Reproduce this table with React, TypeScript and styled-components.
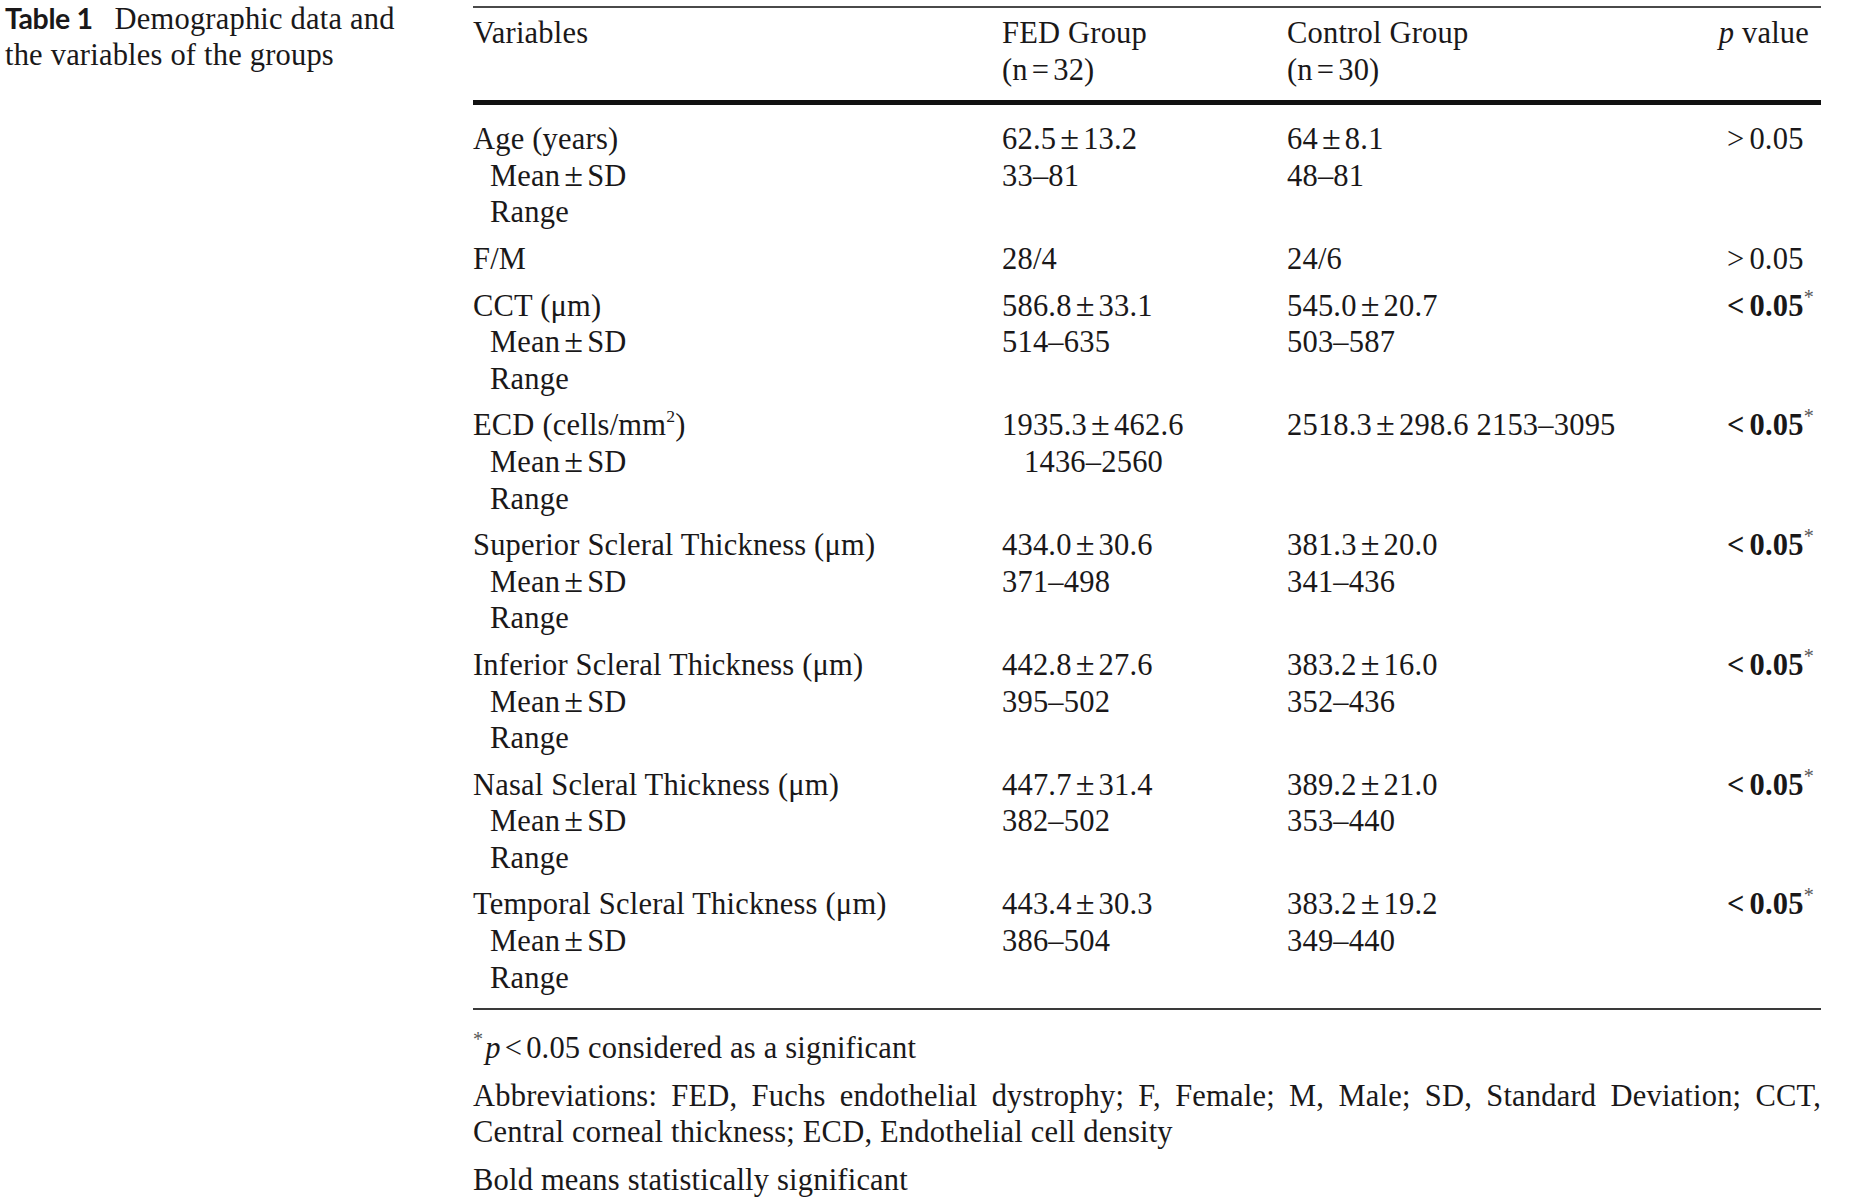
import React from 'react';
import styled, { createGlobalStyle } from 'styled-components';

const GlobalStyle = createGlobalStyle`
    html, body {
        margin: 0;
        padding: 0;
        background: #ffffff;
    }
    body {
        width: 1851px;
        height: 1200px;
        overflow: hidden;
        color: #1a1819;
        font-family: "Liberation Serif", "Times New Roman", serif;
        font-size: 30.5px;
        line-height: 36.6px;
        letter-spacing: 0.2px;
    }
`;

const Page = styled.div`
    display: flex;
    align-items: flex-start;
    padding-left: 5px;
`;

const Caption = styled.div`
    width: 468px;
    flex: 0 0 468px;
    line-height: 36px;
    white-space: nowrap;
`;

const CaptionLabel = styled.span`
    font-family: Lato, "Open Sans", sans-serif;
    font-weight: 700;
    font-size: 28.5px;
    letter-spacing: -0.4px;
    margin-right: 22px;
`;

const TableBlock = styled.div`
    width: 1348px;
    padding-top: 6px;
`;

const Rule = styled.div<{ $weight: number; $tone?: string }>`
    height: ${(p) => p.$weight}px;
    background: ${(p) => p.$tone || '#3a3a3a'};
`;

const Grid = styled.div<{ $gap?: number }>`
    display: grid;
    grid-template-columns: 529px 285px 420px 1fr;
    margin-top: ${(p) => p.$gap || 0}px;
`;

const Header = styled(Grid)`
    padding: 7px 0 12px;
`;

const Body = styled.div`
    padding: 16px 0 12px;
`;

const Cell = styled.div<{ $right?: boolean; $inset?: number }>`
    display: flex;
    flex-direction: column;
    white-space: nowrap;
    text-align: ${(p) => (p.$right ? 'right' : 'left')};
    padding-right: ${(p) => (p.$right ? 12 : 0)}px;
    padding-left: ${(p) => p.$inset || 0}px;
`;

const Line = styled.span<{ $indent?: number }>`
    display: block;
    padding-left: ${(p) => p.$indent || 0}px;
`;

const Italic = styled.i`
    font-style: italic;
`;

const Op = styled.span`
    margin: 0 4px;
`;

const PlusMinus = styled.span`
    display: inline-block;
    margin: 0 4px;
    font-size: 1.12em;
    line-height: 0;
`;

const Sup = styled.sup`
    font-size: 0.58em;
    line-height: 0;
    vertical-align: 0.72em;
`;

const Star = styled(Sup)`
    font-weight: 400;
    font-size: 0.66em;
    color: #555555;
    vertical-align: 0.62em;
`;

const PValue = styled.span<{ $bold?: boolean }>`
    font-weight: ${(p) => (p.$bold ? 700 : 400)};
`;

const Notes = styled.div`
    padding-top: 20px;
`;

const Para = styled.p`
    margin: 0 0 11px;
`;

const JustifiedLine = styled.span`
    display: block;
    text-align: justify;
    text-align-last: justify;
`;

const pm = (a: string, b: string) => (
    <>
        {a}
        <PlusMinus>±</PlusMinus>
        {b}
    </>
);

type Group = {
    label: React.ReactNode;
    sub?: boolean;
    fed: React.ReactNode[];
    control: React.ReactNode[];
    p: string;
    sig: boolean;
};

const groups: Group[] = [
    { label: 'Age (years)', sub: true, fed: [pm('62.5', '13.2'), '33–81'], control: [pm('64', '8.1'), '48–81'], p: '>', sig: false },
    { label: 'F/M', fed: ['28/4'], control: ['24/6'], p: '>', sig: false },
    { label: 'CCT (μm)', sub: true, fed: [pm('586.8', '33.1'), '514–635'], control: [pm('545.0', '20.7'), '503–587'], p: '<', sig: true },
    {
        label: (
            <>
                ECD (cells/mm<Sup>2</Sup>)
            </>
        ),
        sub: true,
        fed: [pm('1935.3', '462.6'), <Line $indent={22}>1436–2560</Line>],
        control: [<>{pm('2518.3', '298.6')} 2153–3095</>],
        p: '<',
        sig: true,
    },
    { label: 'Superior Scleral Thickness (μm)', sub: true, fed: [pm('434.0', '30.6'), '371–498'], control: [pm('381.3', '20.0'), '341–436'], p: '<', sig: true },
    { label: 'Inferior Scleral Thickness (μm)', sub: true, fed: [pm('442.8', '27.6'), '395–502'], control: [pm('383.2', '16.0'), '352–436'], p: '<', sig: true },
    { label: 'Nasal Scleral Thickness (μm)', sub: true, fed: [pm('447.7', '31.4'), '382–502'], control: [pm('389.2', '21.0'), '353–440'], p: '<', sig: true },
    { label: 'Temporal Scleral Thickness (μm)', sub: true, fed: [pm('443.4', '30.3'), '386–504'], control: [pm('383.2', '19.2'), '349–440'], p: '<', sig: true },
];

const GroupRow = ({ group, first }: { group: Group; first: boolean }) => (
    <Grid $gap={first ? 0 : 10}>
        <Cell>
            <Line>{group.label}</Line>
            {group.sub && (
                <>
                    <Line $indent={17}>
                        Mean<PlusMinus>±</PlusMinus>SD
                    </Line>
                    <Line $indent={17}>Range</Line>
                </>
            )}
        </Cell>
        <Cell>
            {group.fed.map((v, i) => (
                <Line key={i}>{v}</Line>
            ))}
        </Cell>
        <Cell>
            {group.control.map((v, i) => (
                <Line key={i}>{v}</Line>
            ))}
        </Cell>
        <Cell $inset={20}>
            <Line>
                <PValue $bold={group.sig}>
                    {group.p}
                    <Op style={{ marginLeft: 0, marginRight: 5 }} />
                    0.05
                </PValue>
                {group.sig && <Star>*</Star>}
            </Line>
        </Cell>
    </Grid>
);

const App = () => (
    <>
        <GlobalStyle />
        <Page>
            <Caption>
                <CaptionLabel>Table 1</CaptionLabel>
                Demographic data and
                <br />
                the variables of the groups
            </Caption>
            <TableBlock>
                <Rule $weight={2} $tone="#4a4a4a" />
                <Header>
                    <Cell>
                        <Line>Variables</Line>
                    </Cell>
                    <Cell>
                        <Line>FED Group</Line>
                        <Line>
                            (n<Op>=</Op>32)
                        </Line>
                    </Cell>
                    <Cell>
                        <Line>Control Group</Line>
                        <Line>
                            (n<Op>=</Op>30)
                        </Line>
                    </Cell>
                    <Cell $right>
                        <Line>
                            <Italic>p</Italic> value
                        </Line>
                    </Cell>
                </Header>
                <Rule $weight={5} $tone="#111111" />
                <Body>
                    {groups.map((g, i) => (
                        <GroupRow key={i} group={g} first={i === 0} />
                    ))}
                </Body>
                <Rule $weight={2} $tone="#3a3a3a" />
                <Notes>
                    <Para>
                        <Star style={{ marginRight: 2 }}>*</Star>
                        <Italic>p</Italic>
                        <Op>&lt;</Op>0.05 considered as a significant
                    </Para>
                    <Para>
                        <JustifiedLine>
                            Abbreviations: FED, Fuchs endothelial dystrophy; F, Female; M, Male; SD, Standard Deviation; CCT,
                        </JustifiedLine>
                        Central corneal thickness; ECD, Endothelial cell density
                    </Para>
                    <Para>Bold means statistically significant</Para>
                </Notes>
            </TableBlock>
        </Page>
    </>
);

export default App;
